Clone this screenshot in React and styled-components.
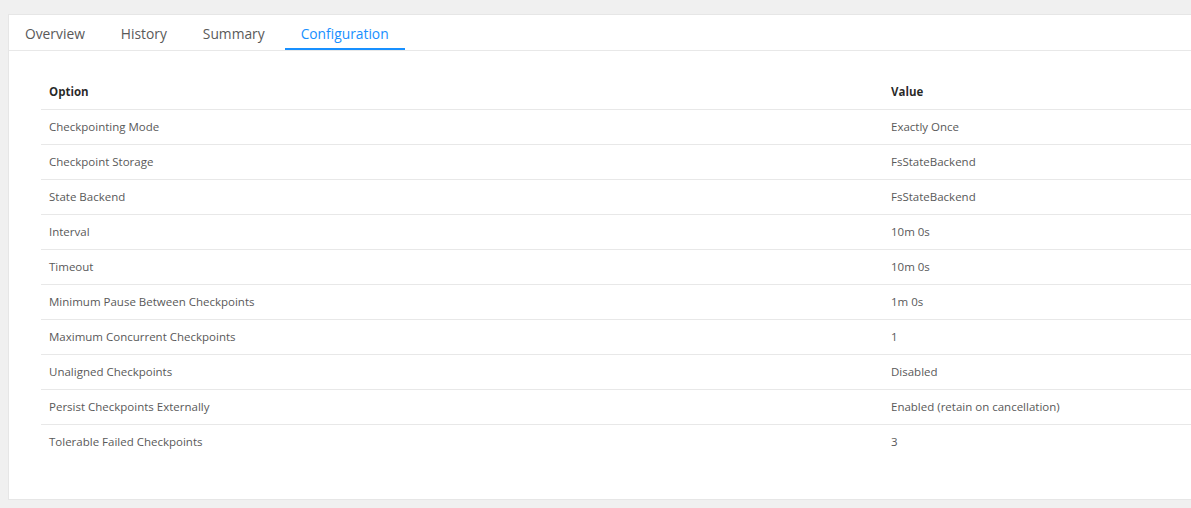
import React from "react";
import styled, { createGlobalStyle } from "styled-components";

const Global = createGlobalStyle`
  html, body { margin: 0; padding: 0; }
  body {
    background: #f0f0f0;
    overflow: hidden;
    font-family: "Open Sans", "Noto Sans", Arial, sans-serif;
  }
`;

const Page = styled.div`
  padding: 14px 0 0 8px;
  width: 100vw;
  box-sizing: border-box;
  overflow: hidden;
`;

const Card = styled.div`
  width: 1760px;
  background: #fff;
  border: 1px solid #e6e6e6;
  box-sizing: border-box;
`;

const TabBar = styled.div`
  display: flex;
  gap: 4px;
  height: 35px;
  border-bottom: 1px solid #e8e8e8;
`;

const Tab = styled.div`
  position: relative;
  padding: 0 16px;
  font-size: 13.8px;
  line-height: 38px;
  color: ${(p) => (p.$active ? "#1890ff" : "#595959")};
  font-weight: ${(p) => (p.$active ? 500 : 400)};
  &::after {
    content: "";
    display: ${(p) => (p.$active ? "block" : "none")};
    position: absolute;
    left: 0;
    right: 0;
    bottom: 0;
    height: 2px;
    background: #1890ff;
  }
`;

const Body = styled.div`
  padding: 24px 32px 40px;
`;

const Table = styled.table`
  width: 100%;
  border-collapse: collapse;
  table-layout: fixed;
  font-size: 11.5px;
`;

const HeadCell = styled.th`
  box-sizing: border-box;
  text-align: left;
  font-weight: 700;
  color: rgba(0, 0, 0, 0.85);
  height: 34px;
  padding: 0 8px;
  border-bottom: 1px solid #e8e8e8;
  width: ${(p) => p.$w || "auto"};
`;

const Row = styled.tr`
  &:last-child td { border-bottom: none; }
`;

const Cell = styled.td`
  color: #595959;
  height: 34px;
  padding: 0 8px;
  border-bottom: 1px solid #e8e8e8;
`;

const tabs = ["Overview", "History", "Summary", "Configuration"];

const rows = [
  ["Checkpointing Mode", "Exactly Once"],
  ["Checkpoint Storage", "FsStateBackend"],
  ["State Backend", "FsStateBackend"],
  ["Interval", "10m 0s"],
  ["Timeout", "10m 0s"],
  ["Minimum Pause Between Checkpoints", "1m 0s"],
  ["Maximum Concurrent Checkpoints", "1"],
  ["Unaligned Checkpoints", "Disabled"],
  ["Persist Checkpoints Externally", "Enabled (retain on cancellation)"],
  ["Tolerable Failed Checkpoints", "3"],
];

export default function App() {
  return (
    <Page>
      <Global />
      <Card>
        <TabBar>
          {tabs.map((t) => (
            <Tab key={t} $active={t === "Configuration"}>
              {t}
            </Tab>
          ))}
        </TabBar>
        <Body>
          <Table>
            <thead>
              <tr>
                <HeadCell $w="842px">Option</HeadCell>
                <HeadCell>Value</HeadCell>
              </tr>
            </thead>
            <tbody>
              {rows.map(([k, v]) => (
                <Row key={k}>
                  <Cell>{k}</Cell>
                  <Cell>{v}</Cell>
                </Row>
              ))}
            </tbody>
          </Table>
        </Body>
      </Card>
    </Page>
  );
}
